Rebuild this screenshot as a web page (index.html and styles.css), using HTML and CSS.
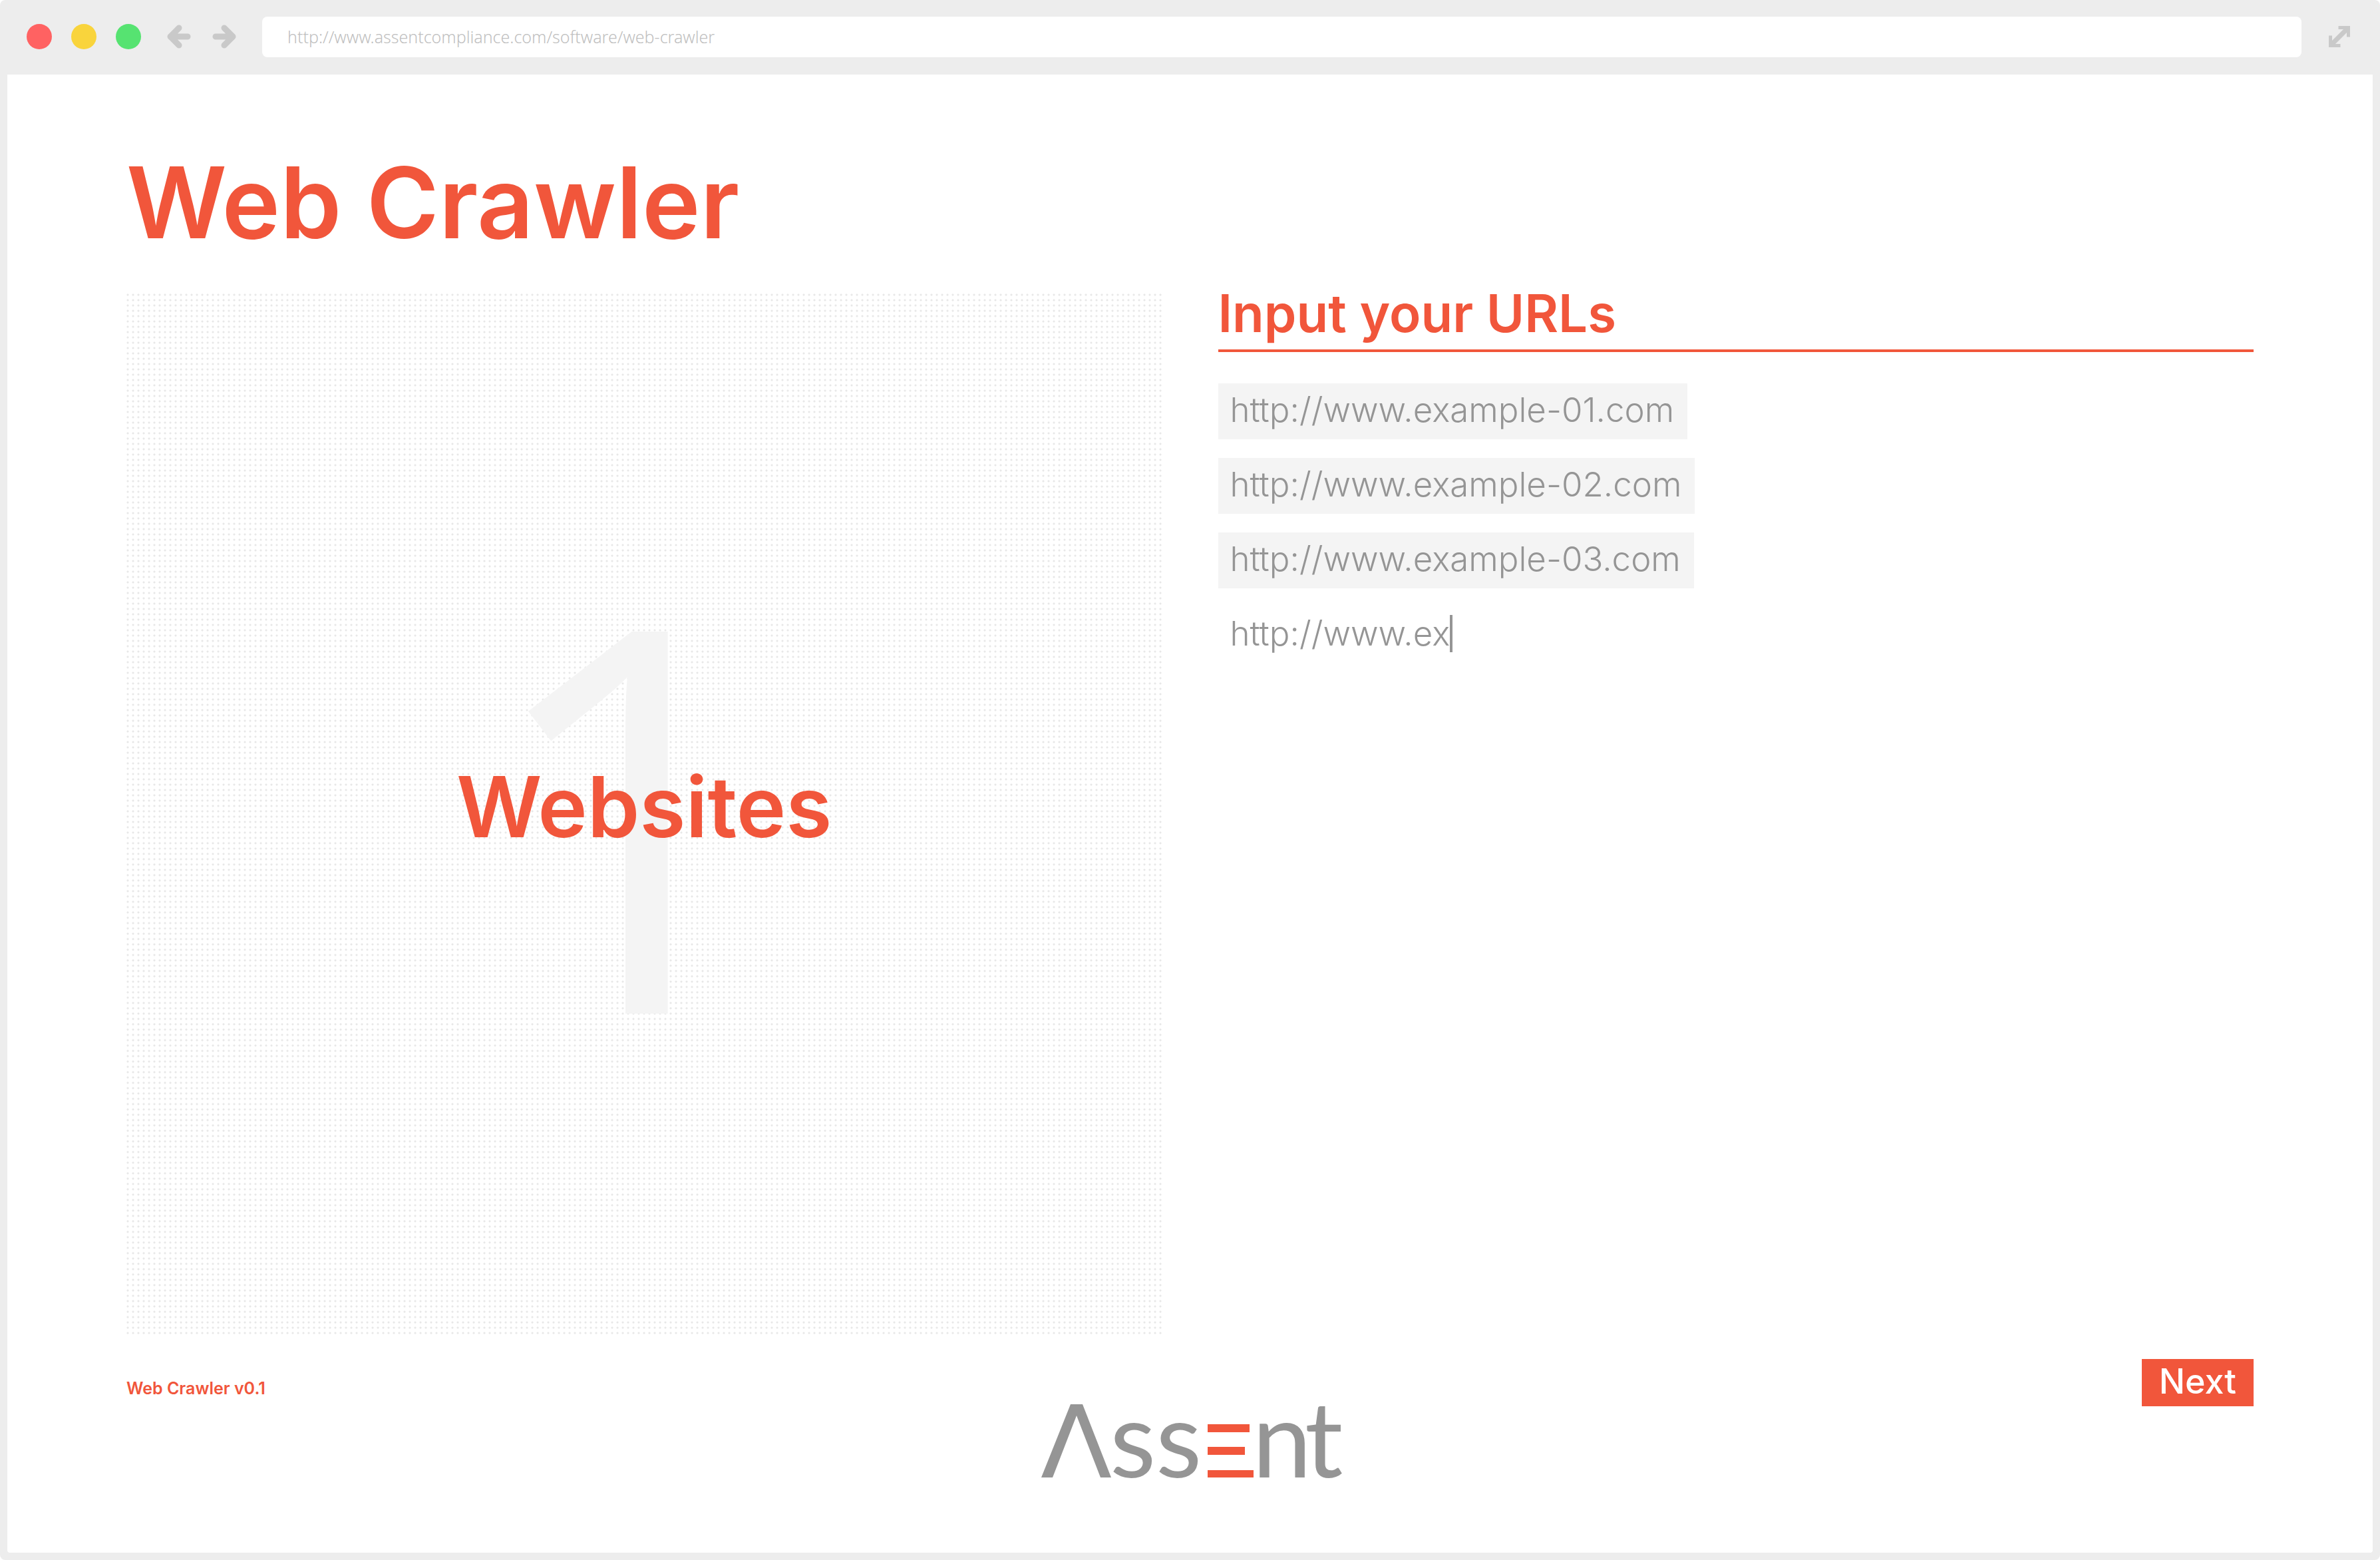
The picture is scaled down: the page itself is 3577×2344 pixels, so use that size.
FILE: index.html
```html
<!DOCTYPE html>
<html lang="en">
<head>
  <meta charset="utf-8">
  <meta name="viewport" content="width=device-width, initial-scale=1">
  <title>Web Crawler</title>
  <link rel="stylesheet" href="styles.css">
</head>
<body>
  <div class="browser">
    <header class="toolbar">
      <div class="lights">
        <span class="light light-close"></span>
        <span class="light light-minimise"></span>
        <span class="light light-zoom"></span>
      </div>
      <nav class="history" aria-label="History">
        <button class="icon-button" type="button" aria-label="Back">
          <svg class="arrow" viewBox="0 0 36 36" aria-hidden="true"><path d="M18 5 5 18l13 13M5 18h26"/></svg>
        </button>
        <button class="icon-button" type="button" aria-label="Forward">
          <svg class="arrow" viewBox="0 0 36 36" aria-hidden="true"><path d="M18 5l13 13-13 13M31 18H5"/></svg>
        </button>
      </nav>
      <input class="address" type="text" aria-label="Address" value="http://www.assentcompliance.com/software/web-crawler">
      <button class="icon-button" type="button" aria-label="Full screen">
        <svg class="expand" viewBox="0 0 32 32" aria-hidden="true"><path d="M5 27 27 5"/><path class="expand-corner" d="M14.500 2.500h15v14M2.500 14.500v15h15"/></svg>
      </button>
    </header>

    <div class="page">
      <h1 class="title">Web Crawler</h1>

      <main class="columns">
        <section class="step">
          <span class="step-number">1</span>
          <h2 class="step-name">Websites</h2>
        </section>

        <section class="urls">
          <h2 class="urls-heading"><label for="new-url">Input your URLs</label></h2>
          <ul class="url-list">
            <li class="url">http://www.example-01.com</li>
            <li class="url">http://www.example-02.com</li>
            <li class="url">http://www.example-03.com</li>
          </ul>
          <div class="url-entry">
            <input class="url-input" id="new-url" type="text" size="12" value="http://www.ex">
            <span class="caret"></span>
          </div>
        </section>
      </main>

      <footer class="footer">
        <p class="version">Web Crawler v0.1</p>
        <svg class="logo" viewBox="0 0 448 113" role="img" aria-label="Assent">
          <path class="logo-grey" d="M0 110 44 0h18l43 110H89L53 17 17 110z"/>
          <text class="logo-grey logo-text" x="103 172 317 396" y="110">ssnt</text>
          <path class="logo-accent" d="M250 30h63v12h-63zM250 64h56v12h-56zM250 99h69v11h-69z"/>
        </svg>
        <button class="next" type="button">Next</button>
      </footer>
    </div>
  </div>
</body>
</html>
```
FILE: styles.css
```css
:root {
  --accent: #f1563b;
  --grey: #959595;
  --chrome: #ededed;
  --chrome-icon: #c9c9c9;
  --panel: #f4f4f4;
}

* {
  box-sizing: border-box;
}

body {
  margin: 0;
  background: #fff;
  font-family: Inter, "Liberation Sans", sans-serif;
}

h1,
h2,
p,
ul {
  margin: 0;
  padding: 0;
}

button,
input {
  border: 0;
  padding: 0;
  background: none;
  font-family: inherit;
}

.browser {
  display: flex;
  flex-direction: column;
  min-height: 100vh;
  padding: 0 11px 11px;
  border-radius: 8px;
  background: var(--chrome);
}

/* Browser toolbar */

.toolbar {
  display: flex;
  align-items: center;
  height: 112px;
  padding: 0 34px 2px 29px;
}

.lights {
  display: flex;
  gap: 29px;
}

.light {
  width: 38px;
  height: 38px;
  border-radius: 50%;
}

.light-close {
  background: #ff6262;
}

.light-minimise {
  background: #f9d43c;
}

.light-zoom {
  background: #56e371;
}

.history {
  display: flex;
  gap: 32px;
  margin: 0 39px;
}

.icon-button {
  display: flex;
}

.arrow,
.expand {
  fill: none;
  stroke: var(--chrome-icon);
}

.arrow {
  width: 36px;
  height: 36px;
  stroke-width: 9px;
  stroke-linecap: round;
  stroke-linejoin: round;
}

.expand {
  width: 32px;
  height: 32px;
  stroke-width: 7px;
}

.expand-corner {
  stroke-width: 5px;
}

.address {
  flex: 1;
  height: 61px;
  margin-right: 41px;
  padding: 0 38px;
  border-radius: 8px;
  background: #fff;
  color: #c0c0c0;
  font: 350 25px "Noto Sans", sans-serif;
}

/* Page */

.page {
  display: flex;
  flex: 1;
  flex-direction: column;
  padding: 113px 179px 110px;
  border-radius: 0 0 4px 4px;
  background: #fff;
}

.title {
  margin-bottom: 56px;
  color: var(--accent);
  font-size: 148px;
  font-weight: 600;
  line-height: 160px;
}

.columns {
  display: grid;
  flex: 1;
  grid-template-columns: 1fr 1fr;
  gap: 84px;
}

.step {
  display: grid;
  place-items: center;
  padding-bottom: 24px;
  background-image: radial-gradient(circle at 2px 2px, #e8e8e8 1px, transparent 2px);
  background-size: 8px 8px;
}

.step-number,
.step-name {
  grid-area: 1 / 1;
}

.step-number {
  padding-right: 34px;
  color: var(--panel);
  font: 460 804px/1 "Open Sans", sans-serif;
}

.step-name {
  color: var(--accent);
  font-size: 126px;
  font-weight: 600;
  line-height: 1;
}

.urls-heading {
  margin-bottom: 47px;
  padding-bottom: 24px;
  border-bottom: 4px solid var(--accent);
  color: var(--accent);
  font-size: 78px;
  font-weight: 600;
  line-height: 60px;
}

.url-list {
  display: flex;
  flex-direction: column;
  align-items: flex-start;
  gap: 28px;
  margin-bottom: 28px;
  list-style: none;
}

.url,
.url-entry {
  padding: 0 20px 4px 18px;
  color: var(--grey);
  font-size: 51px;
  font-weight: 350;
  line-height: 80px;
}

.url {
  background: var(--panel);
}

.url-entry {
  display: flex;
  align-items: center;
}

.url-input {
  field-sizing: content;
  height: 80px;
  outline: 0;
  color: inherit;
  font: inherit;
}

.caret {
  width: 4px;
  height: 56px;
  background: var(--grey);
}

/* Footer */

.footer {
  display: grid;
  grid-template-columns: 1fr auto 1fr;
  align-items: start;
  padding-top: 36px;
}

.version {
  padding-top: 29px;
  color: var(--accent);
  font-size: 25px;
  font-weight: 600;
  line-height: 30px;
}

.logo {
  width: 448px;
  height: 113px;
  margin-top: 68px;
  overflow: visible;
}

.logo-grey {
  fill: var(--grey);
}

.logo-accent {
  fill: var(--accent);
}

.logo-text {
  font: 400 160px Lato, sans-serif;
}

.next {
  justify-self: end;
  padding: 0 26px 3px;
  background: var(--accent);
  color: #fff;
  font-size: 52px;
  font-weight: 500;
  line-height: 68px;
}
```
